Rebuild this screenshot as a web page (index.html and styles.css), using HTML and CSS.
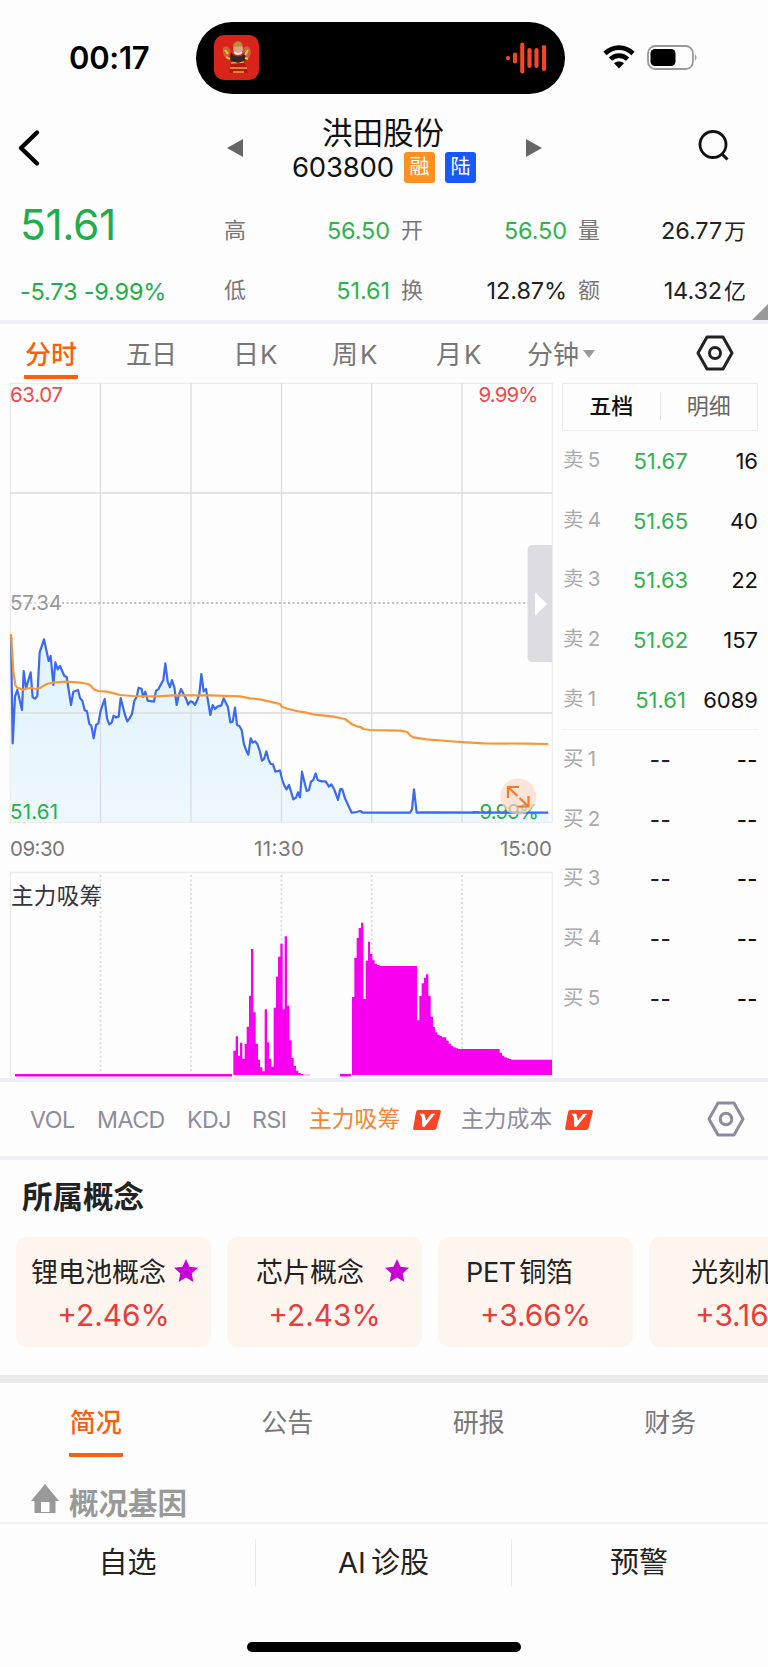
FILE: index.html
```html
<!DOCTYPE html>
<html lang="zh-CN">
<head>
<meta charset="utf-8">
<title>洪田股份 603800</title>
<link rel="stylesheet" href="styles.css">
</head>
<body>
<header class="status">
  <span class="time">00:17</span>
  <div class="island">
    <svg class="app" viewBox="0 0 45 45"><rect width="45" height="45" rx="10" fill="#d9241c"/><path d="M9 13c5-4 7 1 8 4l-4 6c-3-1-5-5-4-10zM36 13c-4-4-7 0-7 4l3 7c4-1 6-5 4-11z" fill="#c9682c"/><path d="M17 26h13l4 12H15z" fill="#b51610"/><path d="M17 28l13-1M16 33h17M19 37h11" stroke="#efa63d" stroke-width="1.500"/><path d="M17 17c2 6 12 6 14 0l1 8-8 3-8-3z" fill="#332522"/><circle cx="24" cy="14" r="5" fill="#dfa284"/><path d="M19 12c0-7 9-8 10-1z" fill="#b98a38"/><path d="M20 17q4 4 8 0" stroke="#eee" stroke-width="2" fill="none"/><path d="M11 15l3 4M34 15l-3 5M12 22l4 2M34 24l-3-1" stroke="#f3bd50" stroke-width="2"/></svg>
    <svg class="wave" viewBox="0 0 42 32"><path d="M3 16v.1M10 12.500v7M17.300 2.500v27M24.500 8v16M31.500 8v16M39 5v22" stroke="#f8452a" stroke-width="4.200" stroke-linecap="round"/></svg>
  </div>
  <svg class="wifi" viewBox="0 0 32 24"><g fill="none" stroke="#000" stroke-width="4.600"><path d="M2 8.500C10 .7 22 .7 30 8.500"/><path d="M7.400 14.200c5-4.800 12.200-4.800 17.200 0"/></g><path d="M16 23.500l-5-5.200c2.600-2.500 7.400-2.500 10 0z"/></svg>
  <svg class="battery" viewBox="0 0 51 25"><rect x="1" y="1" width="45" height="23" rx="7.500" fill="none" stroke="#999" stroke-width="1.800"/><rect x="3.500" y="4" width="25" height="17" rx="4.500"/><path d="M48 9q3 3.500 0 7z" fill="#999"/></svg>
</header>

<nav class="navbar">
  <svg class="back" viewBox="0 0 24 38"><path d="M20 3.500L4 19l16 15.500" fill="none" stroke="#000" stroke-width="4.400" stroke-linecap="round" stroke-linejoin="round"/></svg>
  <svg class="prev" viewBox="0 0 16 18"><path d="M16 0v18L0 9z" fill="#666"/></svg>
  <div class="name"><h1>洪田股份</h1><div class="code"><span>603800</span><b class="tag orange">融</b><b class="tag blue">陆</b></div></div>
  <svg class="next" viewBox="0 0 16 18"><path d="M0 0v18L16 9z" fill="#666"/></svg>
  <svg class="search" viewBox="0 0 32 32"><circle cx="15" cy="14.500" r="13" fill="none" stroke="#111" stroke-width="2.800"/><path d="M23.500 23.500l6 6" stroke="#111" stroke-width="3"/></svg>
</nav>

<section class="quote">
  <strong class="price">51.61</strong><span class="k">高</span><span class="v g">56.50</span><span class="k">开</span><span class="v g">56.50</span><span class="k">量</span><span class="v">26.77<u>万</u></span>
  <span class="change">-5.73 -9.99%</span><span class="k">低</span><span class="v g">51.61</span><span class="k">换</span><span class="v">12.87%</span><span class="k">额</span><span class="v">14.32<u>亿</u></span>
  <i class="corner"></i>
</section>

<nav class="periods">
  <span class="t1 on">分时</span><span class="t2">五日</span><span class="t3">日K</span><span class="t4">周K</span><span class="t5">月K</span><span class="t6">分钟<i class="caret"></i></span>
  <svg class="hex" viewBox="0 0 38 36"><path d="M11 2h16l9 16-9 16H11L2 18z" fill="none" stroke="#222" stroke-width="3" stroke-linejoin="round"/><circle cx="19" cy="18" r="5.500" fill="none" stroke="#222" stroke-width="3"/></svg>
</nav>

<main class="market">
  <div class="charts">
    <svg class="chart" viewBox="0 380 562 702">
      <defs><linearGradient id="area" x1="0" y1="0" x2="0" y2="1"><stop offset="0" stop-color="#dff3fd"/><stop offset="1" stop-color="#eef7fe"/></linearGradient></defs>
      <g transform="translate(0 610) scale(.33333)">
        <path fill="url(#area)" d="M33 636V75L38 400 45 260 52 240 66 300 71 183 78 235 92 187 98 262 105 266 112 258 119 127 132 88 146 153 152 138 160 225 166 157 173 178 180 168 193 198 200 201 213 285 220 245 234 240 240 264 247 272 254 301 261 304 268 342 274 347 281 385 288 345 295 340 302 302 314 267 321 325 328 343 335 338 341 317 348 322 356 320 362 264 375 315 382 334 389 325 396 312 403 273 410 260 416 233 425 237 429 260 436 245 443 272 462 275 468 242 475 238 490 210 496 160 503 215 510 232 516 210 523 232 530 285 536 257 543 237 560 270 564 284 571 274 578 276 585 285 592 270 598 252 604 192 611 244 618 237 631 315 638 285 645 297 652 290 664 286 671 265 684 292 691 337 698 335 705 293 711 345 718 348 725 360 732 403 739 422 745 434 752 385 758 398 765 394 772 402 779 422 786 452 792 447 799 424 806 450 812 462 819 463 826 485 840 482 847 510 853 527 860 538 867 525 874 548 880 568 888 563 894 547 900 562 906 485 913 515 920 543 927 540 933 515 940 510 947 490 953 510 965 514 977 514 987 530 994 523 1002 537 1014 570 1021 537 1027 538 1035 565 1055 608 1230 608 1236 598 1242 538 1250 608 1645 608V636z"/>
      </g>
      <g fill="none" stroke="#dcdcdf" stroke-width="1.300"><path d="M10.300 383.300h542v439h-542z" stroke="#ececef"/><path d="M100.500 383v439M191 383v439M281.500 383v439M371.700 383v439M462 383v439M10 493h542M10 713h542"/></g>
      <path d="M62 603h466" stroke="#aaa" stroke-width="1.600" stroke-dasharray="2 2.520"/>
      <path d="M12 603h50" stroke="#aaa" stroke-width="1.600" stroke-dasharray="2 2.520" opacity=".5"/>
      <g class="axis">
        <text x="10" y="402" fill="#f2494c" textLength="53">63.07</text><text x="478.500" y="402" fill="#f2494c" textLength="60">9.99%</text>
        <text x="10" y="610" fill="#999" textLength="52">57.34</text><text x="10" y="819" fill="#27ae48" textLength="48">51.61</text><text x="471" y="819" fill="#27ae48" textLength="68">-9.99%</text>
        <text x="10" y="855.500" fill="#777" textLength="55">09:30</text><text x="254" y="855.500" fill="#777" textLength="50">11:30</text><text x="500" y="855.500" fill="#777" textLength="52">15:00</text>
      </g>
      <g transform="translate(0 610) scale(.33333)" fill="none" stroke-linejoin="round">
        <path stroke="#3a6af0" stroke-width="6.600" d="M33 75L38 400 45 260 52 240 66 300 71 183 78 235 92 187 98 262 105 266 112 258 119 127 132 88 146 153 152 138 160 225 166 157 173 178 180 168 193 198 200 201 213 285 220 245 234 240 240 264 247 272 254 301 261 304 268 342 274 347 281 385 288 345 295 340 302 302 314 267 321 325 328 343 335 338 341 317 348 322 356 320 362 264 375 315 382 334 389 325 396 312 403 273 410 260 416 233 425 237 429 260 436 245 443 272 462 275 468 242 475 238 490 210 496 160 503 215 510 232 516 210 523 232 530 285 536 257 543 237 560 270 564 284 571 274 578 276 585 285 592 270 598 252 604 192 611 244 618 237 631 315 638 285 645 297 652 290 664 286 671 265 684 292 691 337 698 335 705 293 711 345 718 348 725 360 732 403 739 422 745 434 752 385 758 398 765 394 772 402 779 422 786 452 792 447 799 424 806 450 812 462 819 463 826 485 840 482 847 510 853 527 860 538 867 525 874 548 880 568 888 563 894 547 900 562 906 485 913 515 920 543 927 540 933 515 940 510 947 490 953 510 965 514 977 514 987 530 994 523 1002 537 1014 570 1021 537 1027 538 1035 565 1055 608 1070 606 1081 603 1088 608 1230 608 1236 598 1242 538 1250 608 1270 607 1645 608"/>
        <path stroke="#f79838" stroke-width="6.600" d="M33 72L40 185 46 225 52 234 58 235 68 240 80 235 95 234 108 237 122 233 140 222 160 218 200 215 240 218 265 222 275 230 283 239 295 243 320 245 345 251 360 255 400 258 470 259 520 256 630 256 720 259 750 265 780 268 810 275 840 282 845 290 865 297 890 303 915 307 940 313 1000 320 1035 327 1055 342 1070 349 1082 351 1090 357 1110 360 1200 362 1222 366 1230 376 1240 382 1280 388 1340 393 1400 397 1450 400 1580 401 1645 402"/>
      </g>
      <path d="M552 545h-19q-5.500 0-5.500 5.500v106q0 5.500 5.500 5.500h19z" fill="#dddce2"/><path d="M535 592v24l12-12z" fill="#fff"/>
      <circle cx="518.300" cy="796.500" r="18" fill="#ffd5c7" fill-opacity=".68"/>
      <path d="M508 798v-11h11M508 787l9.500 9M519.500 798l9 8.500M528.500 796v10.500h-11" fill="none" stroke="#f47a2a" stroke-width="2.200"/>
      <path d="M10.300 1077V872.500h542V1077" fill="none" stroke="#ececef" stroke-width="1.300"/>
      <path d="M100.500 875v200M191 875v200M281.500 875v200M371.700 875v200M462 875v200" fill="none" stroke="#dadadd" stroke-width="1.800" stroke-dasharray="2 2.520"/>
      <text class="sub" x="11" y="903.500" textLength="91">主力吸筹</text>
      <path d="M15 1075.300h217M340 1075.300h11" stroke="#f700ee" stroke-width="2.600"/>
      <g transform="translate(210 900) scale(.33333)" fill="#f800ef">
        <path d="M70 525V452h7V409h7V467h6V428h7V476h7V432h6V380h7V287h6V147h7V337h7V431h7V479h6V502h7V514h7V328h7V427h6V476h7V500h7V323h7V230h6V170h7V131h7V328h6V109h7V317h7V421h7V474h6V498h7V512h7V519h7V522h8V524h20V526z"/>
        <path d="M426 525V291h7V174h7V114h6V84h7V68h7V297h7V182h7V125h6V162h7V181h7V191h7V195h7V197h7V198H621V361h7V288h7V250h7V233h6V223h7V288h7V350h7V381h6V397h7V404h7V408h7V412h13V422h7V431h7V438h7V442h7V445h7V447H869V458h7V467h7V472h7V475h7V477h7V479H1026V525z"/>
      </g>
    </svg>
  </div>
  <aside class="book">
    <div class="switch"><b>五档</b><i></i><span>明细</span></div>
    <div class="row"><span>卖 5</span><b class="g">51.67</b><em>16</em></div>
    <div class="row"><span>卖 4</span><b class="g">51.65</b><em>40</em></div>
    <div class="row"><span>卖 3</span><b class="g">51.63</b><em>22</em></div>
    <div class="row"><span>卖 2</span><b class="g">51.62</b><em>157</em></div>
    <div class="row last"><span>卖 1</span><b class="g">51.61</b><em>6089</em></div>
    <div class="row none"><span>买 1</span><b>--</b><em>--</em></div>
    <div class="row none"><span>买 2</span><b>--</b><em>--</em></div>
    <div class="row none"><span>买 3</span><b>--</b><em>--</em></div>
    <div class="row none"><span>买 4</span><b>--</b><em>--</em></div>
    <div class="row none"><span>买 5</span><b>--</b><em>--</em></div>
  </aside>
</main>

<nav class="indicators">
  <span class="i1">VOL</span><span class="i2">MACD</span><span class="i3">KDJ</span><span class="i4">RSI</span><span class="i5 on">主力吸筹</span>
  <svg class="vip" viewBox="0 0 29 21"><path d="M5 0h22q2.500 0 2 2l-4.500 17q-.5 2-2.500 2H2q-2.500 0-2-2L3 2q.5-2 2-2z" fill="#fb4526"/><path d="M6.500 4h5l2 7L19 4h4L12 17.500H9.500L9 7z" fill="#fff"/></svg>
  <span class="i6">主力成本</span>
  <svg class="vip v2" viewBox="0 0 29 21"><path d="M5 0h22q2.500 0 2 2l-4.500 17q-.5 2-2.500 2H2q-2.500 0-2-2L3 2q.5-2 2-2z" fill="#fb4526"/><path d="M6.500 4h5l2 7L19 4h4L12 17.500H9.500L9 7z" fill="#fff"/></svg>
  <svg class="hex h2" viewBox="0 0 38 36"><path d="M11 2h16l9 16-9 16H11L2 18z" fill="none" stroke="#8d8c9d" stroke-width="3" stroke-linejoin="round"/><circle cx="19" cy="18" r="5.800" fill="none" stroke="#8d8c9d" stroke-width="3"/></svg>
</nav>

<section class="concepts">
  <h2>所属概念</h2>
  <div class="cards">
    <article class="c1"><p>锂电池概念<svg viewBox="0 0 24 23"><path d="M12 0l3.500 7.800 8.500.9-6.300 5.700L19.400 23 12 18.600 4.600 23l1.700-8.600L0 8.700l8.500-.9z" fill="#c800d6"/></svg></p><strong>+2.46%</strong></article>
    <article class="c2"><p>芯片概念<svg viewBox="0 0 24 23"><path d="M12 0l3.500 7.800 8.500.9-6.300 5.700L19.400 23 12 18.600 4.600 23l1.700-8.600L0 8.700l8.500-.9z" fill="#c800d6"/></svg></p><strong>+2.43%</strong></article>
    <article class="c3"><p>PET 铜箔</p><strong>+3.66%</strong></article>
    <article class="c4"><p>光刻机</p><strong>+3.16%</strong></article>
  </div>
</section>

<nav class="info"><span class="on">简况</span><span>公告</span><span>研报</span><span>财务</span></nav>
<section class="profile"><svg viewBox="0 0 28 29"><path d="M14 0l14 17h-3.500v12H3.500V17H0z" fill="#999"/><path d="M10 18h8.500v10H10z" fill="#fdfdfd"/></svg><h3>概况基因</h3></section>
<footer class="actions"><span>自选</span><span class="ai">AI 诊股</span><span>预警</span></footer>
<div class="home"></div>
</body>
</html>
```
FILE: styles.css
```css
*{box-sizing:border-box;margin:0;padding:0}
body{width:768px;height:1667px;overflow:hidden;background:#fdfdfd;color:#222;font-family:Inter,"Noto Sans CJK SC",sans-serif;white-space:nowrap}
svg{display:block;flex:none}
i,em{font-style:normal}
.g{color:#2fb34f!important}

.status{height:115px;display:flex;align-items:flex-start}
.time{width:196px;padding:39px 0 0 69px;font-size:31px;line-height:38px;font-weight:600;color:#000;letter-spacing:-.3px}
.island{width:369px;height:72px;margin-top:22px;border-radius:36px;background:#000;display:flex;justify-content:space-between;align-items:center;padding:0 18px}
.app{width:45px;height:45px;margin-top:-1px}
.wave{width:42px;height:32px}
.wifi{width:32px;height:24px;margin:45px 0 0 38px}
.battery{width:51px;height:25px;margin:45px 0 0 12px}

.navbar{height:79px;display:flex;align-items:flex-start}
.back{width:24px;height:38px;margin:14px 0 0 17px}
.prev{width:16px;height:18px;margin:24px 0 0 186px}
.name{width:184px;margin-left:49px;display:flex;flex-direction:column}
.name h1{padding-left:30px;font-size:30.5px;line-height:36px;font-weight:400;color:#111}
.code{display:flex;align-items:center;font-size:27.5px;line-height:32px;color:#111}
.code span{flex:none;width:112px;letter-spacing:-.2px}
.tag{flex:none;width:31px;height:31px;border-radius:3px;color:#fff;font-size:20px;line-height:30px;text-align:center;font-weight:400;margin-right:10px}
.orange{background:#ff9122}.blue{background:#1759ff}
.next{width:16px;height:18px;margin:24px 0 0 50px}
.search{width:32px;height:32px;margin:15px 0 0 156px}

.quote{position:relative;height:130px;display:grid;grid-template-columns:203px 23px 144px 33px 144px 33px 146px;grid-template-rows:66px 54px;padding:4px 0 0 20px;border-bottom:4px solid #eeeef6;align-items:center;font-size:24px}
.price{font-size:42.500px;line-height:50px;font-weight:400;color:#20ae48;letter-spacing:-.4px;margin:-13px 0 0}
.change{color:#20ae48;font-size:23.500px;letter-spacing:-.2px}
.k{font-size:22px;line-height:32px;color:#777;text-align:right;padding-bottom:3px}
.v{text-align:right;font-size:23.500px;line-height:32px;letter-spacing:-.1px}
.v u{text-decoration:none;font-size:22px;margin-left:2px}
.corner{position:absolute;right:0;bottom:0;border-left:16px solid transparent;border-bottom:16px solid #999}

.periods{height:56px;display:flex;align-items:flex-start;font-size:26px;color:#777;line-height:37px;padding:12px 0 0 24px}
.periods span{height:43px}
.periods .on{color:#ff5e0a;border-bottom:4px solid #ff5e0a;border-radius:1px;font-weight:500}
.t1{width:54px;text-align:center}.t2{width:108px;padding-left:48px;letter-spacing:-1px}.t3{width:97px;padding-left:47px;letter-spacing:1px}
.t4{width:104px;padding-left:49px;letter-spacing:2px}.t5{width:92px;padding-left:49px;letter-spacing:2px}.t6{width:120px;padding-left:48px;display:flex}
.caret{margin:14px 0 0 4px;height:0;border:6px solid transparent;border-top:8px solid #999;border-bottom:0}
.hex{width:38px;height:36px;margin:-1px 0 0 97px}

.market{height:698px;display:flex}
.charts{width:562px}
.chart{width:562px;height:702px}
.axis text{font:20.500px Inter,sans-serif}
.sub{font:22.500px "Noto Sans CJK SC",sans-serif;fill:#333344}
.book{width:196px;padding-top:3px}
.switch{height:48px;border:1.500px solid #ececef;display:flex;align-items:center;font-size:22px;line-height:42px;color:#666;padding-bottom:3px}
.switch b,.switch span{flex:1;text-align:center}
.switch b{font-weight:500;color:#111}.switch i{width:1px;height:28px;background:#e5e5e9}
.row{height:59.800px;display:grid;grid-template-columns:60px 77px 59px;align-items:center;font-size:22px}
.row span{color:#aaa;font-size:20.500px;line-height:30px;padding:0 0 2px 1px;word-spacing:-1.500px}.row b{font-weight:400;text-align:center;color:#222}.row em{text-align:right;color:#111}
.last{border-bottom:1.500px solid #f1f1f3}
.none b,.none em{font-weight:500;letter-spacing:.5px}

.indicators{height:82px;border-top:4px solid #eeeef6;border-bottom:4px solid #eeeef6;display:flex;align-items:center;font-size:23.200px;line-height:34px;color:#8e8d9e;padding:0 0 0 30px}
.i1,.i2,.i3,.i4{letter-spacing:-.5px;padding-top:2px}
.i1{width:67px}.i2{width:90px}.i3{width:65px}.i4{width:57px}.i5,.i6{width:104px;font-size:22.800px}
.indicators .on{color:#f98332}
.vip{width:28px;height:20px;margin-top:2px}.i6{margin-left:20px;width:104px}
.h2{margin:0 0 0 114px}

.concepts{height:223px;border-bottom:8px solid #ebebeb;overflow:hidden}
.concepts h2{height:77px;padding:15px 0 0 22px;font-size:30.500px;line-height:44px;font-weight:700}
.cards{display:flex;gap:16px;padding-left:16px}
.cards article{flex:none;width:195px;height:110px;border-radius:11px;background:#fff5ef;display:flex;flex-direction:column;padding:17px 0 0}
.cards p{font-size:27px;line-height:38px;display:flex}
.cards strong{font-size:29.800px;line-height:46px;color:#e83d3d;font-weight:400;text-align:center}
.cards svg{width:24px;height:23px;margin:5px 0 0 8px}
.c1 p{padding-left:15px}.c2 p{padding-left:29px}.c2 svg{margin-left:21px}.c3 p{padding-left:28px;letter-spacing:-.3px;word-spacing:-4px}.c4 p{padding-left:42px}

.info{height:75px;display:flex;justify-content:space-around;font-size:26px;line-height:38px;color:#777;padding:21px 2px 0 0}
.info span{width:54px;height:53px;text-align:center}
.info .on{color:#ff5e0a;border-bottom:4px solid #ff5e0a;border-radius:1px;font-weight:500}
.profile{height:66px;padding:26px 0 0 31px;display:flex;gap:10px;border-bottom:2px solid #f1f1f1}
.profile svg{width:28px;height:29px}
.profile h3{font-size:29.500px;line-height:39px;color:#999;font-weight:700}
.actions{height:77px;display:flex;padding-top:15px}
.actions span{width:256px;height:48px;line-height:48px;font-size:29px;text-align:center;border-right:1.500px solid #e9e9e9}
.actions .ai{word-spacing:-3px}
.actions span:last-child{border:0;padding-right:2px}
.home{width:274px;height:10px;border-radius:5px;background:#000;margin:41px 0 0 247px}
```
